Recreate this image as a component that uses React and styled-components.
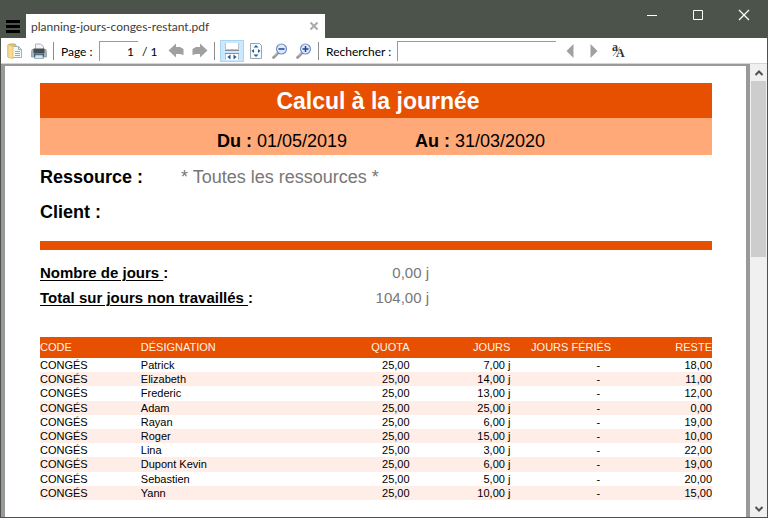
import React from "react";
import styled, { createGlobalStyle } from "styled-components";

const ORANGE = "#e65000";

const GlobalStyle = createGlobalStyle`
  * { box-sizing: border-box; }
  body { margin: 0; overflow: hidden; font-family: Lato, "Open Sans", sans-serif; font-size: 12px; color: #000; }
  button, input { font: inherit; color: inherit; }
  button { border: 0; padding: 0; background: none; }
`;

const Window = styled.div`
  display: flex;
  flex-direction: column;
  height: 100vh;
  background: #4b534a;
`;

const TitleBar = styled.header`
  display: flex;
  align-items: flex-end;
  height: 38px;
  flex: none;
`;

const MenuButton = styled.button`
  display: flex;
  width: 26px;
  height: 24px;
  padding: 6px 6px 0;
`;

const Tab = styled.div`
  display: flex;
  align-items: center;
  justify-content: space-between;
  width: 299px;
  height: 24px;
  padding: 0 7px 0 5px;
  background: #fff;
  color: #3c3c3c;
`;

const TabTitle = styled.span`
  line-height: 24px;
  padding-top: 2px;
  white-space: nowrap;
`;

const TabClose = styled.button`
  display: flex;
`;

const WindowControls = styled.div`
  display: flex;
  align-self: flex-start;
  margin-left: auto;
  padding-right: 1px;
`;

const WindowButton = styled.button`
  display: flex;
  align-items: center;
  justify-content: center;
  width: 46px;
  height: 30px;
`;

const Toolbar = styled.div`
  display: flex;
  align-items: center;
  flex: none;
  height: 26px;
  margin: 0 1px;
  padding-left: 2px;
  background: #fff;
  border-bottom: 1px solid #d4d4d4;
`;

const ToolButton = styled.button`
  display: flex;
  align-items: center;
  justify-content: center;
  flex: none;
  width: 24px;
  height: 22px;
  background: ${(p) => (p.$active ? "#cce8ff" : "transparent")};
  border: 1px solid ${(p) => (p.$active ? "#a9d5f5" : "transparent")};
`;

const Separator = styled.span`
  flex: none;
  width: 1px;
  height: 18px;
  margin: 0 5px 0 2px;
  background: #8d8d8d;
`;

const Label = styled.label`
  flex: none;
  width: ${(p) => p.$width}px;
  padding: 2px 0 0 2px;
  white-space: nowrap;
`;

const Field = styled.input`
  flex: none;
  width: ${(p) => p.$width}px;
  height: 20px;
  padding: 0 4px;
  text-align: ${(p) => p.$align || "left"};
  background: #fff;
  border: 0 solid #9a9a9a;
  border-width: 1px 0 0 1px;
  outline: none;
`;

const PageCount = styled.span`
  flex: none;
  width: 26px;
  padding: 2px 0 0 4px;
  white-space: nowrap;
`;

const SearchNav = styled.div`
  display: flex;
  padding-left: 2px;
`;

const Viewer = styled.main`
  display: flex;
  flex: 1;
  min-height: 0;
  margin: 0 1px 1px;
  background: #999;
`;

const Canvas = styled.div`
  flex: 1;
  min-width: 0;
  overflow: hidden;
  padding: 2px 4px 0;
`;

const Sheet = styled.article`
  min-height: 1040px;
  padding: 17px 34px 0 35px;
  background: #fff;
  font-family: "Liberation Sans", Arial, sans-serif;
  font-size: 18px;
`;

const Title = styled.h1`
  margin: 0;
  padding-top: 2px;
  background: ${ORANGE};
  color: #fff;
  font-size: 23px;
  line-height: 33px;
  text-align: center;
  padding-left: 4px;
`;

const Period = styled.div`
  display: flex;
  justify-content: center;
  gap: 68px;
  height: 37px;
  padding: 4px 0 0 10px;
  background: #ffa878;
  line-height: 38px;
`;

const Criteria = styled.dl`
  display: grid;
  grid-template-columns: 141px 1fr;
  grid-auto-rows: 35px;
  margin: 5px 0 0;
  line-height: 35px;

  dt { font-weight: bold; }
  dd { margin: 0; color: #777; }
`;

const Rule = styled.hr`
  height: 9px;
  margin: 11px 0 10px;
  border: 0;
  background: ${ORANGE};
`;

const Totals = styled.dl`
  display: grid;
  grid-template-columns: 289px 100px;
  grid-auto-rows: 25px;
  margin: 0 0 27px;
  font-size: 15px;
  line-height: 25px;

  dt { font-weight: bold; }
  dd { margin: 0; color: #777; text-align: right; }
`;

const Underlined = styled.span`
  text-decoration: underline;
  text-decoration-thickness: 1px;
  text-underline-offset: 2px;
  white-space: pre;
`;

const LeaveTable = styled.table`
  width: 100%;
  height: 163px;
  table-layout: fixed;
  border-collapse: collapse;
  font-size: 11px;
  line-height: 14px;

  tbody tr:nth-child(even) { background: #ffede7; }
`;

const HeadRow = styled.tr`
  height: 21px;
  background: ${ORANGE};
  color: #fff3e4;
`;

const HeadCell = styled.th`
  width: ${(p) => p.$width};
  padding: 0 0 2px;
  font-weight: normal;
  text-align: ${(p) => p.$align || "left"};
`;

const Cell = styled.td`
  padding: 0 ${(p) => (p.$inset ? 11 : 0)}px 0 0;
  text-align: ${(p) => p.$align || "left"};
  white-space: nowrap;
`;

const Scrollbar = styled.div`
  display: flex;
  flex-direction: column;
  width: 17px;
  padding: 1px 0 0 1px;
  background: #f0f0f0;
`;

const ScrollButton = styled.button`
  display: flex;
  align-items: center;
  justify-content: center;
  height: 16px;
`;

const ScrollTrack = styled.div`
  flex: 1;
`;

const ScrollThumb = styled.div`
  height: 42%;
  margin-right: 1px;
  background: #cdcdcd;
`;

const Drawing = styled.svg`
  display: block;
  flex: none;
  overflow: visible;
`;

const Icon = ({ w = 16, h = 16, children }) => (
  <Drawing width={w} height={h} viewBox={`0 0 ${w} ${h}`} fill="none" aria-hidden="true">
    {children}
  </Drawing>
);

const MenuIcon = () => (
  <Icon w={14} h={13}>
    <path d="M0 1.5h14M0 6.5h14M0 11.5h14" stroke="#000" strokeWidth="3" />
  </Icon>
);

const OpenIcon = () => (
  <Icon>
    <path d="M1 2l2-1h5l1 1v12H1z" fill="#e9c574" stroke="#d2a852" />
    <path d="M5.5 3.5h6l3 3v8h-9z" fill="#f2f8f7" stroke="#9fb4b8" />
    <path d="M11.5 3.5v3h3M8 8.500h5M8 10.500h5M8 12.500h5" stroke="#8fb0b8" />
    <path d="M1 1.500l5 2v12l-5-1z" fill="#f8dc95" stroke="#dcb765" strokeWidth=".7" />
  </Icon>
);

const PrintIcon = () => (
  <Icon>
    <path d="M4.500 1h5l3 2.500V8h-8z" fill="#f2f5f6" stroke="#a9b6bd" />
    <path d="M1 6.500h14l.5 3v4.500H.5V9.500z" fill="#aab5bb" stroke="#8b979d" strokeWidth=".8" />
    <path d="M2.500 5.500h11v5h-11z" fill="#454c51" />
    <path d="M3 11h10v3.500H3z" fill="#3f596a" />
    <path d="M4.500 12h7l1 3.500h-9z" fill="#cfe5f2" stroke="#7c98aa" strokeWidth=".7" />
  </Icon>
);

const BackIcon = () => (
  <Icon>
    <path d="M.5 7.500L8 .5V4h4L15.500 6v6L12 11H8v3.500z" fill="#a0a0a0" />
  </Icon>
);

const ForwardIcon = () => (
  <Icon>
    <path d="M15.500 7.500L8 .5V4H4L.5 6v6L4 11h4v3.500z" fill="#a0a0a0" />
  </Icon>
);

const FitWidthIcon = () => (
  <Icon w={16} h={18}>
    <path d="M1.500 1v6.500h13V1" fill="#fff" stroke="#b4c3ce" />
    <path d="M1.500 18v-6.500h13V18" fill="#fff" stroke="#b4c3ce" />
    <path d="M1 8.500h14M1 11.500h14" stroke="#8a9095" />
    <path d="M6.500 12.500v5L3.500 15zM9.500 12.500v5l3-2.500z" fill="#23558f" />
  </Icon>
);

const FitPageIcon = () => (
  <Icon w={14} h={16}>
    <path d="M1.500.5h9l2 2v13h-11z" fill="#f8fbfd" stroke="#9aa5ae" />
    <path d="M7 2l2.500 2.500h-5zM7 14l2.500-2.500h-5zM2.500 8L5 6v4zM11.500 8L9 6v4z" fill="#245c94" />
  </Icon>
);

const ZoomIcon = ({ plus }) => (
  <Icon>
    <path d="M1.500 14.500L6 10" stroke="#8d8d8d" strokeWidth="2.500" strokeLinecap="round" />
    <path d="M2 13.500L5.500 10" stroke="#d5d5d5" />
    <circle cx="9.500" cy="6" r="5" fill="#dceafa" stroke="#7590cb" strokeWidth="1.200" />
    <path d={plus ? "M6.500 6h6M9.500 3v6" : "M6.500 6h6"} stroke="#24428f" strokeWidth="1.500" />
  </Icon>
);

const TriangleIcon = ({ right }) => (
  <Icon w={8} h={14}>
    <path d={right ? "M.5 0v14l7-7z" : "M7.500 0v14l-7-7z"} fill="#a0a0a0" />
  </Icon>
);

const CaseIcon = () => (
  <Icon w={14} h={18}>
    <path d="M2 14L9 5" stroke="#999" />
    <text x="1" y="9" fontFamily="Liberation Serif, serif" fontSize="12" fontWeight="bold" fill="#333">a</text>
    <text x="5" y="15" fontFamily="Liberation Serif, serif" fontSize="12" fontWeight="bold" fill="#333">A</text>
  </Icon>
);

const rows = [
  ["Patrick", "7,00", "18,00"],
  ["Elizabeth", "14,00", "11,00"],
  ["Frederic", "13,00", "12,00"],
  ["Adam", "25,00", "0,00"],
  ["Rayan", "6,00", "19,00"],
  ["Roger", "15,00", "10,00"],
  ["Lina", "3,00", "22,00"],
  ["Dupont Kevin", "6,00", "19,00"],
  ["Sebastien", "5,00", "20,00"],
  ["Yann", "10,00", "15,00"],
];

export default function App() {
  return (
    <Window>
      <GlobalStyle />
      <TitleBar>
        <MenuButton aria-label="Menu"><MenuIcon /></MenuButton>
        <Tab>
          <TabTitle>planning-jours-conges-restant.pdf</TabTitle>
          <TabClose aria-label="Fermer l'onglet">
            <Icon w={8} h={8}><path d="M.5.5l7 7M7.500.5l-7 7" stroke="#aaa" strokeWidth="2" /></Icon>
          </TabClose>
        </Tab>
        <WindowControls>
          <WindowButton aria-label="Réduire">
            <Icon w={10} h={10}><path d="M0 5.500h10" stroke="#fff" /></Icon>
          </WindowButton>
          <WindowButton aria-label="Agrandir">
            <Icon w={10} h={10}><path d="M.5.5h9v9h-9z" stroke="#fff" /></Icon>
          </WindowButton>
          <WindowButton aria-label="Fermer">
            <Icon w={10} h={10}><path d="M0 0l10 10M10 0L0 10" stroke="#fff" strokeWidth="1.300" /></Icon>
          </WindowButton>
        </WindowControls>
      </TitleBar>
      <Toolbar>
        <ToolButton aria-label="Ouvrir"><OpenIcon /></ToolButton>
        <ToolButton aria-label="Imprimer"><PrintIcon /></ToolButton>
        <Separator />
        <Label htmlFor="page" $width={40}>Page :</Label>
        <Field id="page" $width={39} $align="right" defaultValue="1" />
        <PageCount>/ 1</PageCount>
        <ToolButton aria-label="Page précédente"><BackIcon /></ToolButton>
        <ToolButton aria-label="Page suivante"><ForwardIcon /></ToolButton>
        <Separator />
        <ToolButton $active aria-label="Ajuster à la largeur"><FitWidthIcon /></ToolButton>
        <ToolButton aria-label="Page entière"><FitPageIcon /></ToolButton>
        <ToolButton aria-label="Zoom arrière"><ZoomIcon /></ToolButton>
        <ToolButton aria-label="Zoom avant"><ZoomIcon plus /></ToolButton>
        <Separator />
        <Label htmlFor="search" $width={73}>Rechercher :</Label>
        <Field id="search" $width={159} />
        <SearchNav>
          <ToolButton aria-label="Résultat précédent"><TriangleIcon /></ToolButton>
          <ToolButton aria-label="Résultat suivant"><TriangleIcon right /></ToolButton>
          <ToolButton aria-label="Respecter la casse"><CaseIcon /></ToolButton>
        </SearchNav>
      </Toolbar>
      <Viewer>
        <Canvas>
          <Sheet>
            <Title>Calcul à la journée</Title>
            <Period>
              <span><b>Du :</b> 01/05/2019</span>
              <span><b>Au :</b> 31/03/2020</span>
            </Period>
            <Criteria>
              <dt>Ressource :</dt>
              <dd>* Toutes les ressources *</dd>
              <dt>Client :</dt>
              <dd />
            </Criteria>
            <Rule />
            <Totals>
              <dt><Underlined>Nombre de jours </Underlined>:</dt>
              <dd>0,00 j</dd>
              <dt><Underlined>Total sur jours non travaillés </Underlined>:</dt>
              <dd>104,00 j</dd>
            </Totals>
            <LeaveTable>
              <thead>
                <HeadRow>
                  <HeadCell $width="15%">CODE</HeadCell>
                  <HeadCell $width="25%">DÉSIGNATION</HeadCell>
                  <HeadCell $width="15%" $align="right">QUOTA</HeadCell>
                  <HeadCell $width="15%" $align="right">JOURS</HeadCell>
                  <HeadCell $width="15%" $align="right">JOURS FÉRIÉS</HeadCell>
                  <HeadCell $width="15%" $align="right">RESTE</HeadCell>
                </HeadRow>
              </thead>
              <tbody>
                {rows.map(([name, days, left]) => (
                  <tr key={name}>
                    <Cell>CONGÉS</Cell>
                    <Cell>{name}</Cell>
                    <Cell $align="right">25,00</Cell>
                    <Cell $align="right">{days} j</Cell>
                    <Cell $align="right" $inset>-</Cell>
                    <Cell $align="right">{left}</Cell>
                  </tr>
                ))}
              </tbody>
            </LeaveTable>
          </Sheet>
        </Canvas>
        <Scrollbar>
          <ScrollButton aria-label="Défiler vers le haut">
            <Icon w={10} h={8}><path d="M1.500 6L5 2.500 8.500 6" stroke="#505050" strokeWidth="2" /></Icon>
          </ScrollButton>
          <ScrollTrack><ScrollThumb /></ScrollTrack>
          <ScrollButton aria-label="Défiler vers le bas">
            <Icon w={10} h={8}><path d="M1.500 2L5 5.500 8.500 2" stroke="#505050" strokeWidth="2" /></Icon>
          </ScrollButton>
        </Scrollbar>
      </Viewer>
    </Window>
  );
}
